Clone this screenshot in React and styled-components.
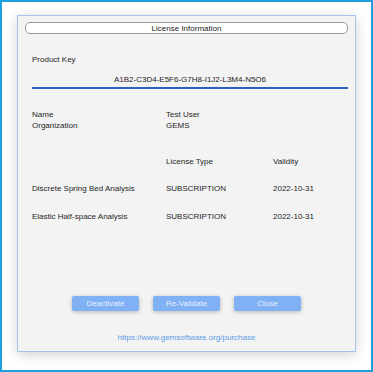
import React from "react";
import styled, { createGlobalStyle } from "styled-components";

const Global = createGlobalStyle`
  html, body { margin: 0; padding: 0; background: #fff; }
  * { box-sizing: border-box; }
  body { font-family: "Liberation Sans", Arial, sans-serif; }
`;

const Frame = styled.div`
  width: 373px;
  height: 372px;
  border: 2px solid #1ea0dc;
  background: #fff;
  padding: 13px 15px 18px 15px;
  display: flex;
`;

const Dialog = styled.div`
  flex: 1;
  display: flex;
  flex-direction: column;
  background: #f3f3f3;
  border: 1px solid #a2c4ef;
  box-shadow: 0 3px 12px rgba(0, 0, 0, 0.18);
  padding: 6px 7px 8px 7px;
  font-size: 8px;
  line-height: 11px;
  color: #1e1e1e;
`;

const TitlePill = styled.div`
  height: 12px;
  border: 1px solid #9a9a9a;
  border-radius: 5px;
  background: #fff;
  text-align: center;
  font-size: 8px;
  line-height: 11px;
  color: #222;
`;

const Body = styled.div`
  padding-left: 7px;
  display: flex;
  flex-direction: column;
  flex: 1;
`;

const Label = styled.div`
  margin-top: ${(p) => p.$mt || 0}px;
`;

const KeyField = styled.div`
  margin-top: 9px;
  text-align: center;
  padding-bottom: 2px;
  border-bottom: 2px solid #2d5fbf;
`;

const Grid = styled.div`
  display: grid;
  grid-template-columns: 134px 107px auto;
  margin-top: ${(p) => p.$mt || 0}px;
`;

const Cell = styled.div``;

const Buttons = styled.div`
  margin-top: auto;
  display: flex;
  justify-content: center;
  gap: 14px;
`;

const Button = styled.button`
  width: 67px;
  height: 15px;
  border: none;
  border-radius: 2px;
  background: #7fb1f4;
  color: #e8f0fd;
  font-family: "Liberation Sans", Arial, sans-serif;
  font-size: 8px;
  padding: 0;
  box-shadow: 0 1px 4px rgba(0, 0, 0, 0.25);
`;

const Link = styled.div`
  margin-top: 21px;
  text-align: center;
  color: #5b9be6;
`;

export default function App() {
  return (
    <>
      <Global />
      <Frame>
        <Dialog>
          <TitlePill>License Information</TitlePill>
          <Body>
            <Label $mt={20}>Product Key</Label>
            <KeyField>A1B2-C3D4-E5F6-G7H8-I1J2-L3M4-N5O6</KeyField>
            <Grid $mt={20}>
              <Cell>Name</Cell>
              <Cell>Test User</Cell>
              <Cell />
              <Cell>Organization</Cell>
              <Cell>GEMS</Cell>
              <Cell />
            </Grid>
            <Grid $mt={25}>
              <Cell />
              <Cell>License Type</Cell>
              <Cell>Validity</Cell>
            </Grid>
            <Grid $mt={16}>
              <Cell>Discrete Spring Bed Analysis</Cell>
              <Cell>SUBSCRIPTION</Cell>
              <Cell>2022-10-31</Cell>
            </Grid>
            <Grid $mt={17}>
              <Cell>Elastic Half-space Analysis</Cell>
              <Cell>SUBSCRIPTION</Cell>
              <Cell>2022-10-31</Cell>
            </Grid>
          </Body>
          <Buttons>
            <Button>Deactivate</Button>
            <Button>Re-Validate</Button>
            <Button>Close</Button>
          </Buttons>
          <Link>https://www.gemsoftware.org/purchase</Link>
        </Dialog>
      </Frame>
    </>
  );
}
